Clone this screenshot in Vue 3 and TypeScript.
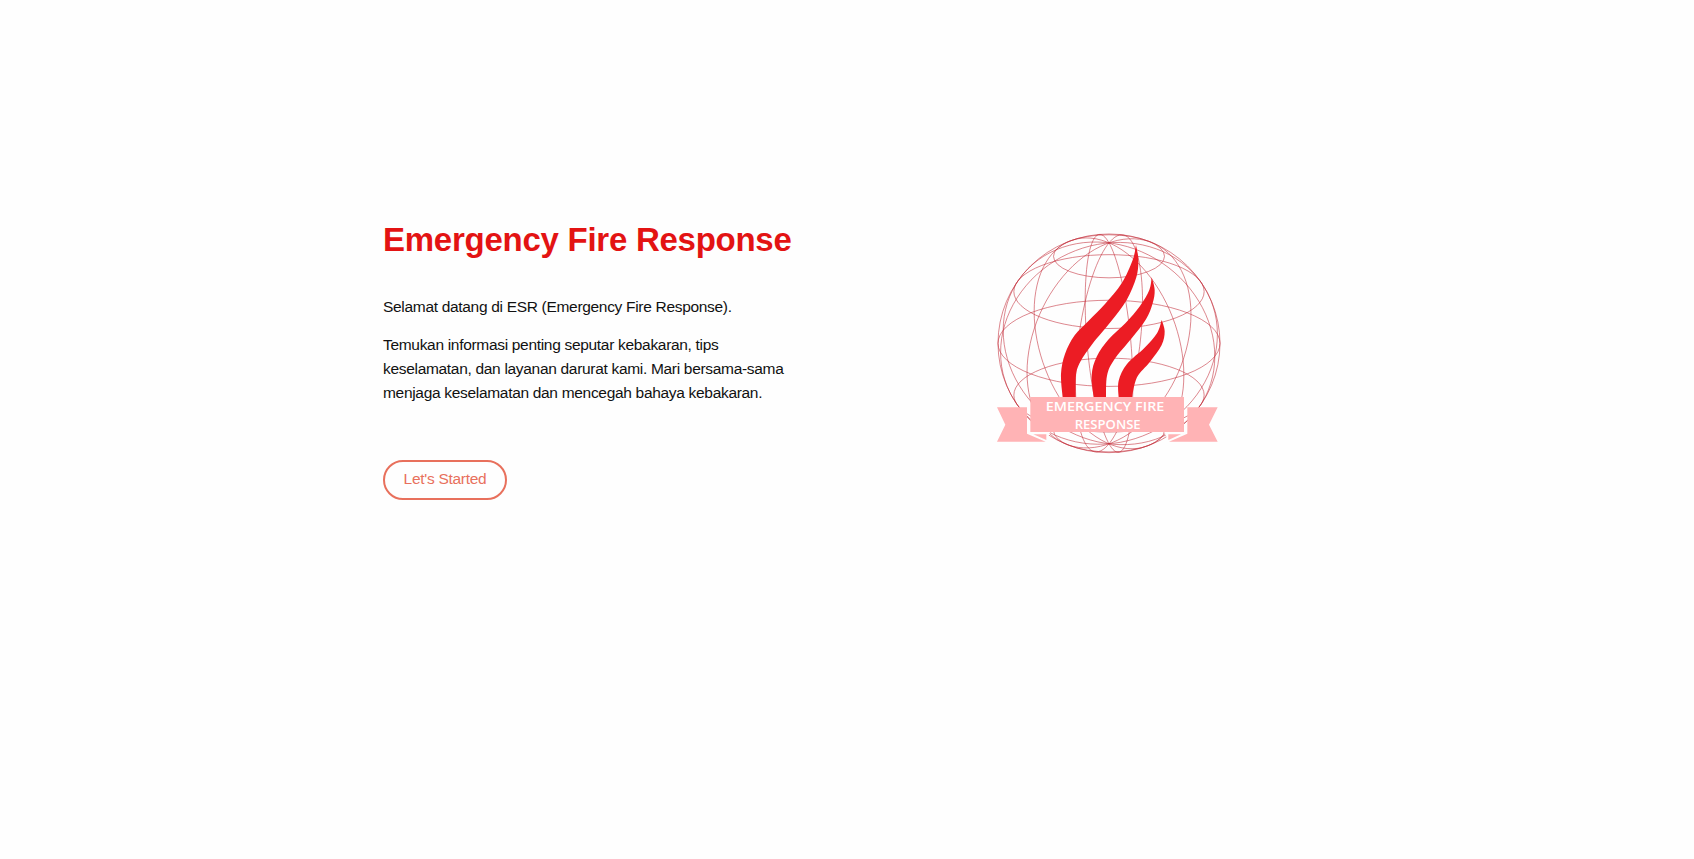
<script setup lang="ts">
const CX = 387
const CY = 370
const RX = 333
const RY = 328
const TILT = (23.2 * Math.PI) / 180
const rad = (d: number) => (d * Math.PI) / 180

const parallels = [60, 31, 0, -31, -60].map((lat) => ({
  cy: CY - RY * Math.sin(rad(lat)) * Math.cos(TILT),
  rx: RX * Math.cos(rad(lat)),
  ry: RY * Math.cos(rad(lat)) * Math.sin(TILT),
}))

function meridian(lon: number): string {
  const pts: string[] = []
  for (let a = 0; a < 360; a += 4) {
    const c = Math.cos(rad(a))
    const x = CX + RX * c * Math.sin(rad(lon))
    const y = CY - RY * (Math.sin(rad(a)) * Math.cos(TILT) - c * Math.cos(rad(lon)) * Math.sin(TILT))
    pts.push(`${x.toFixed(1)} ${y.toFixed(1)}`)
  }
  return `M${pts.join('L')}Z`
}

const meridians = [-77.6, -47.6, -17.6, 12.4, 42.4, 72.4].map(meridian)

type Point = [number, number]

// Smooth curve through a list of points (Catmull-Rom converted to cubic Béziers)
function curve(p: Point[]): string {
  let d = ''
  for (let i = 0; i < p.length - 1; i++) {
    const a = p[Math.max(i - 1, 0)]
    const b = p[i]
    const c = p[i + 1]
    const e = p[Math.min(i + 2, p.length - 1)]
    d += `C${b[0] + (c[0] - a[0]) / 6} ${b[1] + (c[1] - a[1]) / 6} ${c[0] - (e[0] - b[0]) / 6} ${c[1] - (e[1] - b[1]) / 6} ${c[0]} ${c[1]}`
  }
  return d
}

function flame(left: Point[], right: Point[]): string {
  return `M${left[0].join(' ')}${curve(left)}${curve(right)}Z`
}

const flames = [
  flame(
    [[248, 532], [243, 462], [255, 402], [284, 346], [326, 302], [375, 252], [425, 190], [458, 120], [468, 75]],
    [[468, 75], [475, 120], [469, 172], [440, 240], [394, 303], [337, 372], [301, 425], [288, 465], [287, 532]],
  ),
  flame(
    [[341, 532], [335, 465], [350, 410], [386, 358], [436, 310], [480, 258], [508, 210], [515, 172]],
    [[515, 172], [524, 210], [518, 250], [498, 298], [455, 355], [402, 420], [381, 467], [378, 532]],
  ),
  flame(
    [[416, 532], [416, 482], [441, 432], [493, 384], [531, 340], [545, 300]],
    [[545, 300], [554, 334], [545, 375], [510, 425], [471, 472], [456, 532]],
  ),
]
</script>

<template>
  <main class="hero">
    <section class="intro">
      <h1>Emergency Fire Response</h1>
      <p>Selamat datang di ESR (Emergency Fire Response).</p>
      <p>
        Temukan informasi penting seputar kebakaran, tips<br />
        keselamatan, dan layanan darurat kami. Mari bersama-sama<br />
        menjaga keselamatan dan mencegah bahaya kebakaran.
      </p>
      <button type="button">Let's Started</button>
    </section>
    <svg class="logo" viewBox="0 0 780 750" role="img" aria-label="Emergency Fire Response">
      <g class="globe">
        <ellipse :cx="CX" :cy="CY" :rx="RX" :ry="RY" />
        <ellipse v-for="(p, i) in parallels" :key="'p' + i" :cx="CX" :cy="p.cy" :rx="p.rx" :ry="p.ry" />
        <path v-for="(d, i) in meridians" :key="'m' + i" :d="d" />
      </g>
      <g class="flames">
        <path v-for="(d, i) in flames" :key="'f' + i" :d="d" />
      </g>
      <g class="ribbon">
        <path class="gap" d="M141 632H212L198 668Z" />
        <path class="gap" d="M622 632H552L566 668Z" />
        <path d="M51 562H141V641L197 665H51L76 614Z" />
        <path d="M713 562H622V641L567 665H713L687 614Z" />
        <path d="M160 643H199V660Z" />
        <path d="M603 643H565V660Z" />
        <path d="M151 531H612V636H151Z" />
      </g>
      <text x="197" y="572" textLength="356" lengthAdjust="spacingAndGlyphs">EMERGENCY FIRE</text>
      <text x="284" y="626" textLength="198" lengthAdjust="spacingAndGlyphs">RESPONSE</text>
    </svg>
  </main>
</template>

<style>
body {
  margin: 0;
  background: #fefefe;
}
</style>

<style scoped>
.hero {
  display: flex;
  align-items: flex-start;
  height: 859px;
  padding: 220px 0 0 383px;
  box-sizing: border-box;
  font-family: 'Liberation Sans', Arial, sans-serif;
  color: #111;
}
.intro {
  width: 597px;
}
h1 {
  margin: 0 0 36px;
  font-size: 33px;
  letter-spacing: -0.26px;
  line-height: 39px;
  color: #e31313;
  white-space: nowrap;
}
p {
  margin: 0 0 14px;
  font-size: 15.5px;
  letter-spacing: -0.31px;
  line-height: 24px;
  white-space: nowrap;
}
button {
  display: block;
  width: 124px;
  height: 40px;
  margin-top: 55px;
  padding: 0 0 2px;
  border: 2px solid #e8705c;
  border-radius: 20px;
  background: transparent;
  font: 15.5px 'Liberation Sans', Arial, sans-serif;
  letter-spacing: -0.28px;
  color: #e8705c;
}
.logo {
  width: 260px;
  height: 250px;
}
.globe {
  fill: none;
  stroke: #c4303c;
  stroke-width: 2.3;
  stroke-opacity: 0.75;
}
.flames {
  fill: #ec1c24;
}
.ribbon {
  fill: #ffb3b5;
}
.gap {
  fill: #fefefe;
}
text {
  font: 600 40px 'Open Sans', sans-serif;
  fill: #fff;
}
</style>
